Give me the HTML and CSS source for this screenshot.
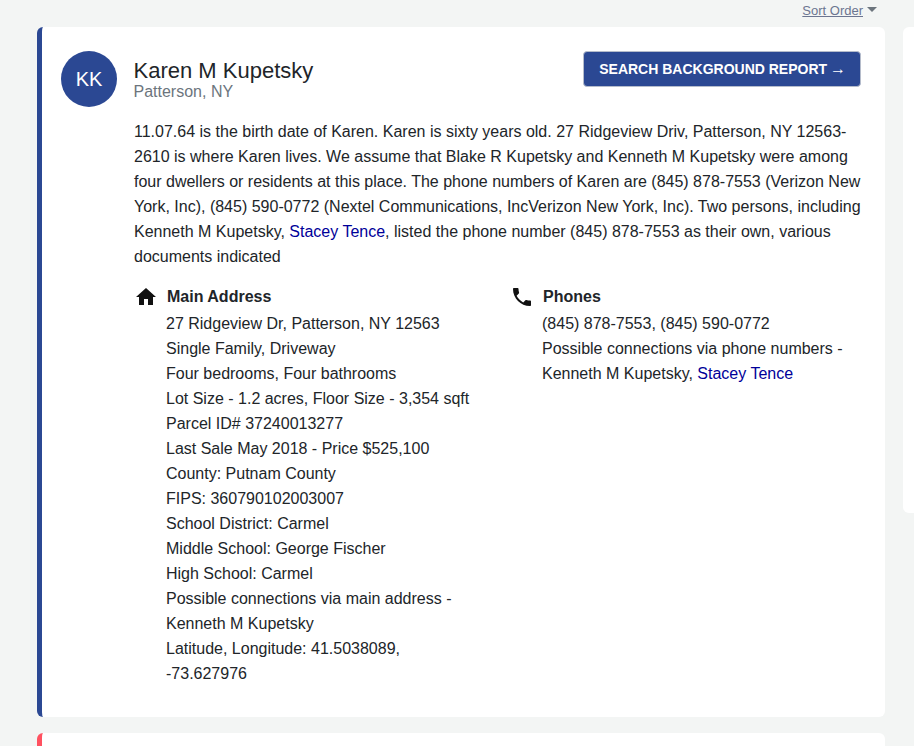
FILE: index.html
```html
<!DOCTYPE html>
<html lang="en">
<head>
  <meta charset="UTF-8">
  <meta name="viewport" content="width=device-width, initial-scale=1.0">
  <title>Karen M Kupetsky</title>
  <link rel="stylesheet" href="styles.css">
</head>
<body>

<div class="sort-bar">
  <a class="sort-link" href="#">Sort Order</a>
  <span class="sort-caret"></span>
</div>

<div class="layout">
  <div class="results">
    <!-- Person card -->
    <div class="card card-blue">
      <div class="card-head">
        <div class="avatar">KK</div>
        <div class="person">
          <h2 class="person-name">Karen M Kupetsky</h2>
          <div class="person-city">Patterson, NY</div>
        </div>
        <a class="report-btn" href="#">SEARCH BACKGROUND REPORT <span class="report-arrow">&#8594;</span></a>
      </div>

      <p class="summary">11.07.64 is the birth date of Karen. Karen is sixty years old. 27 Ridgeview Driv, Patterson, NY 12563-2610 is where Karen lives. We assume that Blake R Kupetsky and Kenneth M Kupetsky were among four dwellers or residents at this place. The phone numbers of Karen are (845) 878-7553 (Verizon New York, Inc), (845) 590-0772 (Nextel Communications, IncVerizon New York, Inc). Two persons, including Kenneth M Kupetsky, <a href="#">Stacey Tence</a>, listed the phone number (845) 878-7553 as their own, various documents indicated</p>

      <div class="details">
        <div class="detail detail-address">
          <div class="detail-title">
            <svg class="detail-icon" viewBox="0 0 24 24"><path d="M10 20v-6h4v6h5v-8h3L12 3 2 12h3v8z"/></svg>
            <span>Main Address</span>
          </div>
          <div class="detail-body">
            <div>27 Ridgeview Dr, Patterson, NY 12563</div>
            <div>Single Family, Driveway</div>
            <div>Four bedrooms, Four bathrooms</div>
            <div>Lot Size - 1.2 acres, Floor Size - 3,354 sqft</div>
            <div>Parcel ID# 37240013277</div>
            <div>Last Sale May 2018 - Price $525,100</div>
            <div>County: Putnam County</div>
            <div>FIPS: 360790102003007</div>
            <div>School District: Carmel</div>
            <div>Middle School: George Fischer</div>
            <div>High School: Carmel</div>
            <div>Possible connections via main address - Kenneth M Kupetsky</div>
            <div>Latitude, Longitude: 41.5038089, -73.627976</div>
          </div>
        </div>

        <div class="detail detail-phones">
          <div class="detail-title">
            <svg class="detail-icon" viewBox="0 0 24 24"><path d="M6.62 10.79c1.44 2.83 3.76 5.14 6.59 6.59l2.2-2.2c.27-.27.67-.36 1.02-.24 1.12.37 2.33.57 3.57.57.55 0 1 .45 1 1V20c0 .55-.45 1-1 1-9.39 0-17-7.61-17-17 0-.55.45-1 1-1h3.5c.55 0 1 .45 1 1 0 1.25.2 2.45.57 3.57.11.35.03.74-.25 1.02l-2.2 2.2z"/></svg>
            <span>Phones</span>
          </div>
          <div class="detail-body">
            <div>(845) 878-7553, (845) 590-0772</div>
            <div>Possible connections via phone numbers - Kenneth M Kupetsky, <a href="#">Stacey Tence</a></div>
          </div>
        </div>
      </div>
    </div>

    <div class="card card-red"></div>
  </div>

  <div class="sidebar"></div>
</div>

</body>
</html>
```

FILE: styles.css
```css
body {
  font-family: "Liberation Sans", Arial, sans-serif;
  font-size: 16px;
  line-height: 25px;
  color: #212529;
  margin: 0;
  padding: 0;
  background-color: #f3f5f4;
}
a {
  color: #000099;
  text-decoration: none;
}
.sort-bar {
  display: flex;
  justify-content: flex-end;
  align-items: center;
  height: 27px;
  padding-right: 37px;
  box-sizing: border-box;
  padding-bottom: 6px;
  font-size: 13px;
  line-height: 20px;
}
.sort-link {
  color: #6c7590;
  text-decoration: underline;
}
.sort-caret {
  width: 0;
  height: 0;
  margin-left: 4px;
  margin-bottom: 3px;
  border-left: 5px solid transparent;
  border-right: 5px solid transparent;
  border-top: 5px solid #6c757d;
}
.layout {
  display: flex;
  align-items: flex-start;
  gap: 18px;
  padding-left: 37px;
}
.results {
  flex: 0 0 848px;
}
.card {
  background: white;
  border-radius: 6px;
  border-left: 5px solid #2b4893;
  box-sizing: border-box;
  margin-bottom: 16px;
  padding: 24px 24px 31px 19px;
}
.card-red {
  border-left-color: #ff5160;
  border-radius: 6px 6px 0 0;
  height: 13px;
  margin-bottom: 0;
  padding: 0;
}
.card-head {
  display: flex;
  align-items: center;
  height: 56px;
}
.avatar {
  flex: 0 0 56px;
  height: 56px;
  border-radius: 50%;
  background-color: #2b4893;
  color: white;
  font-size: 20px;
  text-align: center;
  line-height: 56px;
}
.person {
  flex: 1;
  margin-left: 16.5px;
}
.person-name {
  margin: 0;
  font-size: 22px;
  font-weight: normal;
  line-height: 26px;
}
.person-city {
  color: #6c757d;
  line-height: 16px;
}
.report-btn {
  flex: none;
  align-self: flex-start;
  background-color: #2b4893;
  border: 1px solid #b5bccb;
  border-radius: 4px;
  color: white;
  font-size: 14px;
  font-weight: bold;
  line-height: 34px;
  padding: 0 15px;
  white-space: nowrap;
}
.report-arrow {
  font-size: 16px;
  font-weight: normal;
  line-height: 1;
  margin: 0 -1px;
}
.summary {
  margin: 12px 0 0 73px;
}
.details {
  display: flex;
  margin: 15px 0 0 73px;
}
.detail-address {
  flex: 0 0 376px;
}
.detail-phones {
  flex: 1;
}
.detail-title {
  display: flex;
  align-items: center;
  gap: 9px;
  font-weight: bold;
  margin-bottom: 2px;
}
.detail-icon {
  width: 24px;
  height: 24px;
  fill: #111;
}
.detail-body {
  padding-left: 32px;
}
.detail-address .detail-body {
  max-width: 306px;
}
.sidebar {
  flex: 1;
  height: 486px;
  background: white;
  border-radius: 6px 0 0 6px;
}
```
